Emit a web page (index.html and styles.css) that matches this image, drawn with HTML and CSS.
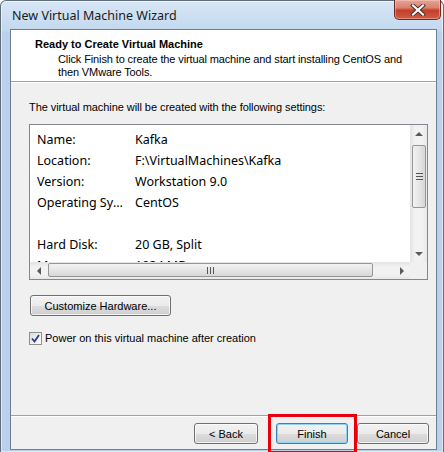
FILE: index.html
```html
<!DOCTYPE html>
<html lang="en">
<head>
    <meta charset="UTF-8">
    <title>New Virtual Machine Wizard</title>
    <link rel="stylesheet" href="styles.css">
</head>
<body>
    <div class="window">
        <div class="titlebar">
            <span class="title">New Virtual Machine Wizard</span>
            <button class="close" title="Close">
                <svg width="16" height="12" viewBox="0 0 16 12">
                    <path d="M3 1.5 L13 10.5 M13 1.5 L3 10.5" stroke="#4a2a24" stroke-width="4" stroke-linecap="square"/>
                    <path d="M3 1.5 L13 10.5 M13 1.5 L3 10.5" stroke="#ffffff" stroke-width="2.2" stroke-linecap="square"/>
                </svg>
            </button>
        </div>

        <div class="client">
            <div class="header">
                <h1>Ready to Create Virtual Machine</h1>
                <p>Click Finish to create the virtual machine and start installing CentOS and<br>then VMware Tools.</p>
            </div>

            <div class="body">
                <p class="intro">The virtual machine will be created with the following settings:</p>

                <div class="listbox">
                    <div class="list-main">
                        <div class="rows">
                            <div class="row"><span class="key">Name:</span><span>Kafka</span></div>
                            <div class="row"><span class="key">Location:</span><span>F:\VirtualMachines\Kafka</span></div>
                            <div class="row"><span class="key">Version:</span><span>Workstation 9.0</span></div>
                            <div class="row"><span class="key">Operating System:</span><span>CentOS</span></div>
                            <div class="row"></div>
                            <div class="row"><span class="key">Hard Disk:</span><span>20 GB, Split</span></div>
                            <div class="row"><span class="key">Memory:</span><span>1024 MB</span></div>
                        </div>
                        <div class="vscroll">
                            <div class="arrow"><span class="tri up"></span></div>
                            <div class="track">
                                <div class="vthumb"><span class="grip"></span></div>
                            </div>
                            <div class="arrow"><span class="tri down"></span></div>
                        </div>
                    </div>
                    <div class="hscroll">
                        <div class="arrow"><span class="tri left"></span></div>
                        <div class="track">
                            <div class="hthumb"><span class="grip"></span></div>
                        </div>
                        <div class="arrow"><span class="tri right"></span></div>
                        <div class="corner"></div>
                    </div>
                </div>

                <button class="btn custom">Customize Hardware...</button>

                <label class="check">
                    <span class="box">
                        <svg width="9" height="9" viewBox="0 0 9 9">
                            <path d="M1 4.5 L3.5 7.5 L8 1" fill="none" stroke="#2a3f8a" stroke-width="1.8"/>
                        </svg>
                    </span>
                    Power on this virtual machine after creation
                </label>
            </div>

            <div class="footer">
                <button class="btn back">&lt; Back</button>
                <button class="btn finish">Finish</button>
                <button class="btn cancel">Cancel</button>
                <div class="highlight"></div>
            </div>
        </div>
    </div>
</body>
</html>
```

FILE: styles.css
```css
body { margin: 0; padding: 0; background: #ffffff; font-family: "Liberation Sans", Arial, sans-serif; font-size: 11px; color: #000; }
.window { position: relative; box-sizing: border-box; width: 444px; height: 452px; border: 1px solid #5f6d7c; border-bottom: none; border-radius: 6px 6px 0 0; background: linear-gradient(#d7e6f6 0, #c3d8ee 30px, #b9d1ea 31px, #b9d1ea 100%); padding: 0 6px 2px 9px; display: flex; flex-direction: column; box-shadow: inset 0 0 0 1px rgba(255, 255, 255, 0.5); }
.titlebar { height: 28px; display: flex; align-items: flex-start; justify-content: space-between; }
.title { font-family: "Noto Sans", sans-serif; font-size: 12.5px; color: #1a1a1a; margin: 6px 0 0 2px; }
.close { width: 47px; height: 20px; margin: -1px -4px 0 0; padding: 0; border: 1px solid #6b2b22; border-top: none; border-radius: 0 0 5px 5px; background: linear-gradient(#e8a396 0, #d9826f 40%, #c2402a 55%, #d05c43 100%); display: flex; align-items: center; justify-content: center; box-shadow: inset 0 0 0 1px rgba(255, 220, 210, 0.4); }
.client { flex: 1; border: 1px solid #6e7e90; background: #f0f0f0; display: flex; flex-direction: column; }
.header { background: #ffffff; height: 52px; border-bottom: 1px solid #a0a0a0; box-shadow: 0 1px 0 #ffffff; padding: 7px 0 0 24px; box-sizing: border-box; }
.header h1 { margin: 0; font-size: 11px; font-weight: bold; line-height: 14px; }
.header p { margin: 2px 0 0 23px; line-height: 13px; letter-spacing: -0.12px; }
.body { flex: 1; padding: 18px 0 0 18px; }
.intro { margin: 0; line-height: 14px; letter-spacing: -0.06px; }
.listbox { margin-top: 10px; width: 399px; height: 156px; box-sizing: border-box; border: 1px solid #828790; background: #ffffff; display: flex; flex-direction: column; }
.list-main { flex: 1; display: flex; overflow: hidden; }
.rows { flex: 1; padding: 4px 0 0 7px; overflow: hidden; font-family: "Noto Sans", sans-serif; font-size: 12.5px; }
.row { height: 21px; line-height: 21px; display: flex; white-space: nowrap; }
.key { width: 86px; margin-right: 12px; overflow: hidden; text-overflow: ellipsis; }
.vscroll { width: 17px; display: flex; flex-direction: column; background: linear-gradient(90deg, #e3e3e3, #f2f2f2 30%, #f2f2f2 70%, #e8e8e8); }
.hscroll { height: 17px; display: flex; background: linear-gradient(#e3e3e3, #f2f2f2 30%, #f2f2f2 70%, #e8e8e8); }
.arrow { width: 17px; height: 17px; display: flex; align-items: center; justify-content: center; flex: none; }
.track { flex: 1; display: flex; }
.vscroll .track { flex-direction: column; padding: 3px 1px 0 2px; }
.hscroll .track { padding: 1px 0 2px 1px; }
.vthumb { height: 63px; box-sizing: border-box; border: 1px solid #969696; border-radius: 2px; background: linear-gradient(90deg, #f2f2f2, #e6e6e6 50%, #d6d6d6); display: flex; align-items: center; justify-content: center; }
.hthumb { width: 325px; box-sizing: border-box; border: 1px solid #969696; border-radius: 2px; background: linear-gradient(#f2f2f2, #e6e6e6 50%, #d6d6d6); display: flex; align-items: center; justify-content: center; }
.vthumb .grip { width: 7px; height: 5px; border-top: 1px solid #555; border-bottom: 1px solid #555; background: linear-gradient(transparent 2px, #555 2px, #555 3px, transparent 3px); }
.hthumb .grip { width: 5px; height: 7px; border-left: 1px solid #555; border-right: 1px solid #555; background: linear-gradient(90deg, transparent 2px, #555 2px, #555 3px, transparent 3px); }
.tri { width: 0; height: 0; border: 4px solid transparent; }
.tri.up { border-bottom: 4px solid #5a5a5a; border-top: none; }
.tri.down { border-top: 4px solid #5a5a5a; border-bottom: none; }
.tri.left { border-right: 4px solid #5a5a5a; border-left: none; }
.tri.right { border-left: 4px solid #5a5a5a; border-right: none; }
.corner { width: 17px; background: #f0f0f0; }
.btn { font-family: "Liberation Sans", Arial, sans-serif; font-size: 11px; color: #000; height: 21px; padding: 0; box-sizing: border-box; border: 1px solid #707070; border-radius: 3px; background: linear-gradient(#f2f2f2 0, #ebebeb 50%, #dddddd 51%, #cfcfcf 100%); box-shadow: inset 0 0 0 1px rgba(255, 255, 255, 0.7); }
.custom { display: block; margin: 15px 0 0 1px; width: 141px; }
.check { display: flex; align-items: center; margin-top: 15px; line-height: 14px; }
.box { width: 13px; height: 13px; box-sizing: border-box; border: 1px solid #8e8f8f; background: linear-gradient(135deg, #dcdcdc, #ffffff); margin-right: 3px; display: flex; align-items: center; justify-content: center; }
.footer { position: relative; height: 34px; border-top: 1px solid #a0a0a0; box-shadow: inset 0 1px 0 #ffffff; display: flex; align-items: flex-start; padding: 7px 0 0 183px; box-sizing: border-box; }
.back { width: 64px; }
.finish { width: 72px; margin-left: 18px; border-color: #3c7fb1; box-shadow: inset 0 0 0 1px #8fd4f5; }
.cancel { width: 72px; margin-left: 9px; }
.highlight { position: absolute; left: 257px; top: -2px; width: 89px; height: 40px; box-sizing: border-box; border: 3px solid #e8000b; }
```
